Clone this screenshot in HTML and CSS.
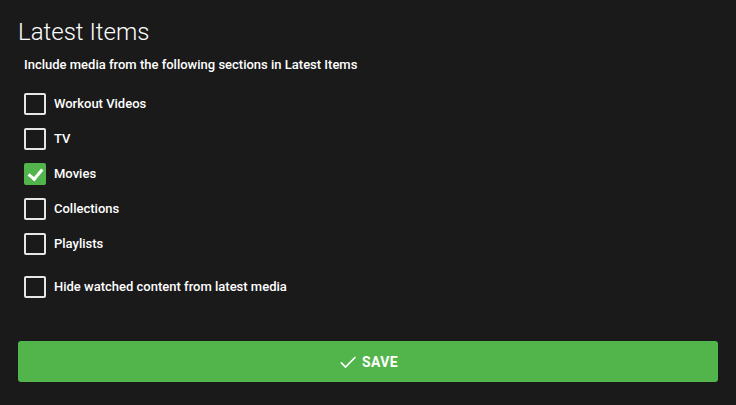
FILE: index.html
```html
<!DOCTYPE html>
<html lang="en">
<head>
    <meta charset="UTF-8">
    <title>Latest Items</title>
    <link rel="stylesheet" href="styles.css">
</head>
<body>
    <div class="page">
        <h2 class="page-title">Latest Items</h2>

        <div class="check-list">
            <div class="check-head">Include media from the following sections in Latest Items</div>
            <label class="check-row">
                <input type="checkbox"/>
                <span class="check-box"></span>
                <span class="check-label">Workout Videos</span>
            </label>
            <label class="check-row">
                <input type="checkbox"/>
                <span class="check-box"></span>
                <span class="check-label">TV</span>
            </label>
            <label class="check-row">
                <input type="checkbox" checked="checked"/>
                <span class="check-box"></span>
                <span class="check-label">Movies</span>
            </label>
            <label class="check-row">
                <input type="checkbox"/>
                <span class="check-box"></span>
                <span class="check-label">Collections</span>
            </label>
            <label class="check-row">
                <input type="checkbox"/>
                <span class="check-box"></span>
                <span class="check-label">Playlists</span>
            </label>
        </div>

        <label class="check-row check-single">
            <input type="checkbox"/>
            <span class="check-box"></span>
            <span class="check-label">Hide watched content from latest media</span>
        </label>

        <button class="btn-save" type="button">
            <svg width="20" height="20" viewBox="0 0 24 24"><path d="M3.5 12.5l5.5 5.5L21 6" fill="none" stroke="#fff" stroke-width="2"/></svg>
            <span>SAVE</span>
        </button>
    </div>
</body>
</html>
```

FILE: styles.css
```css
*{
    margin: 0;
    padding: 0;
    box-sizing: border-box;
}
html,body{
    width: 100%;
    height: 100%;
}
body{
    background-color: #1a1a1a;
    color: #fff;
    font-family: Roboto, "Liberation Sans", sans-serif;
    font-size: 13px;
    overflow: hidden;
}
.page{
    display: flex;
    flex-direction: column;
    padding: 16px 18px 0;
}
.page-title{
    font-size: 24px;
    font-weight: 300;
    line-height: 32px;
    color: #fff;
    margin-bottom: 9px;
}
.check-list{
    display: flex;
    flex-direction: column;
    padding-left: 6px;
}
.check-head{
    font-weight: 500;
    line-height: 16px;
    margin-bottom: 13px;
}
.check-row{
    display: flex;
    align-items: center;
    gap: 8px;
    height: 35px;
    padding-left: 6px;
    font-weight: 500;
    cursor: pointer;
}
.check-list .check-row{
    padding-left: 0;
}
.check-single{
    margin-top: 8px;
}
.check-row input{
    display: none;
}
.check-box{
    position: relative;
    width: 22px;
    height: 22px;
    border: 2px solid #e6e6e6;
    border-radius: 2px;
    flex-shrink: 0;
}
.check-row input:checked + .check-box{
    background-color: #52b54b;
    border-color: #52b54b;
}
.check-row input:checked + .check-box::after{
    content: "";
    position: absolute;
    left: 5px;
    top: 1px;
    width: 6px;
    height: 11px;
    border-right: 3px solid #fff;
    border-bottom: 3px solid #fff;
    transform: rotate(40deg);
}
.check-label{
    line-height: 16px;
}
.btn-save{
    display: flex;
    align-items: center;
    justify-content: center;
    gap: 4px;
    height: 41px;
    margin-top: 37px;
    border: none;
    border-radius: 3px;
    background-color: #52b54b;
    color: #fff;
    font-family: Roboto, "Liberation Sans", sans-serif;
    font-size: 14px;
    font-weight: 700;
    letter-spacing: 0.4px;
}
.btn-save svg{
    display: block;
}
```
